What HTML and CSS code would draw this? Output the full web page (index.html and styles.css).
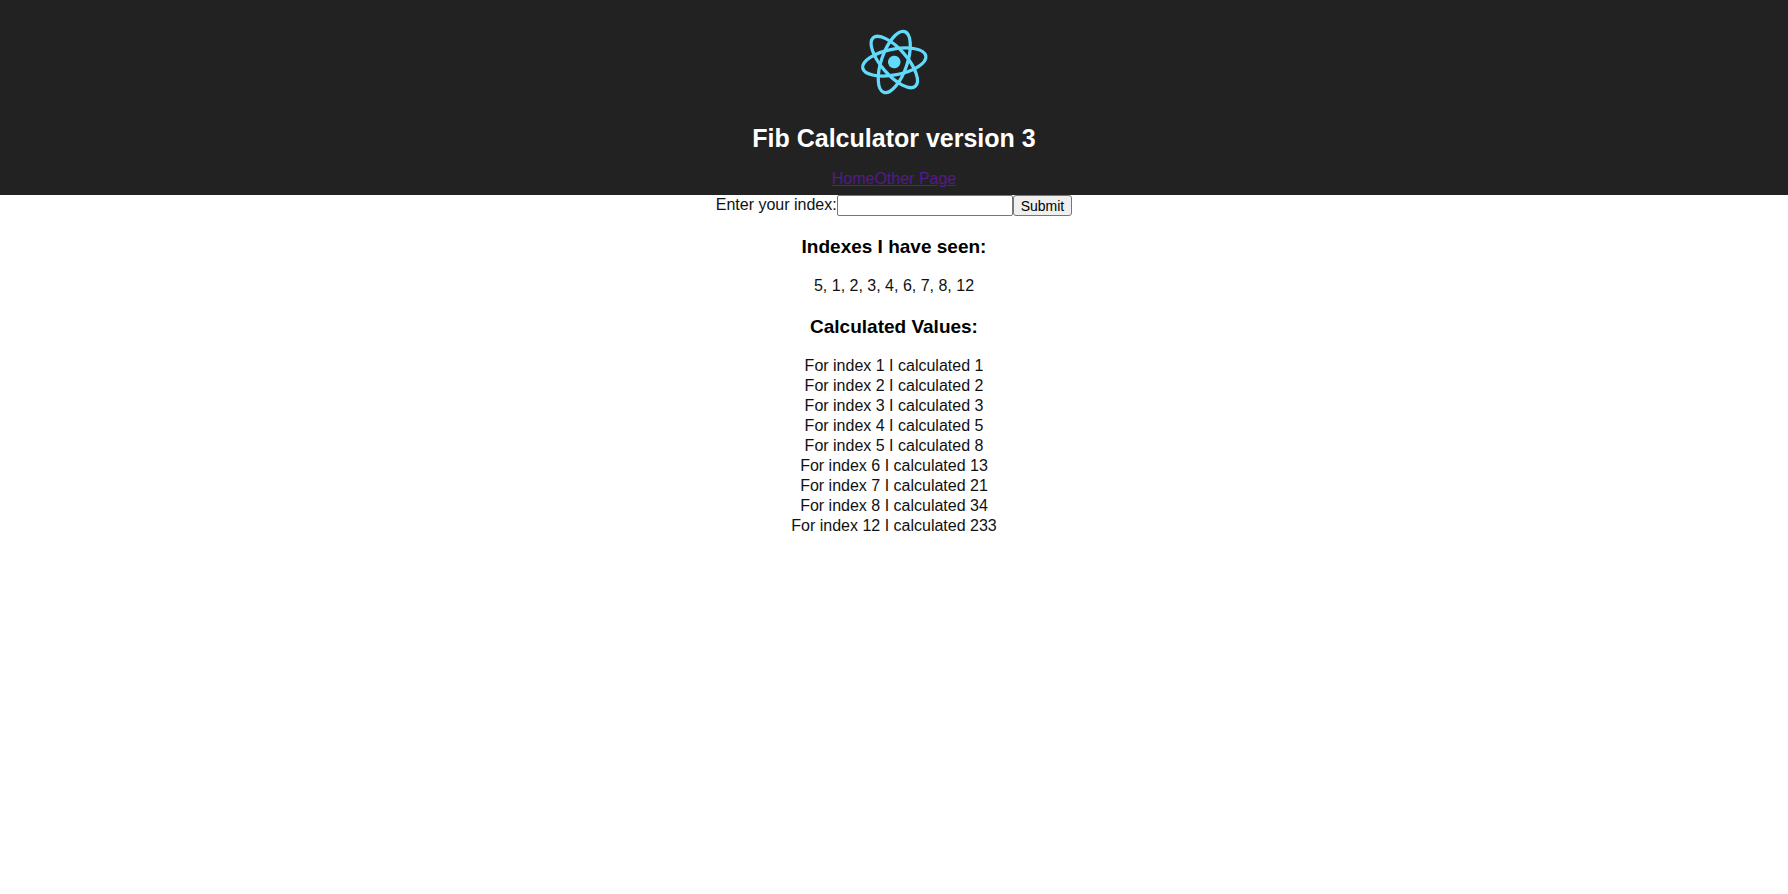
FILE: index.html
```html
<!DOCTYPE html>
<html lang="en">
<head>
<meta charset="utf-8">
<title>Fib Calculator</title>
<link rel="stylesheet" href="styles.css">
</head>
<body>
<div class="app">
  <header class="app-header">
    <svg class="app-logo" viewBox="0 0 600 600" role="img" aria-label="React logo">
      <g transform="translate(302 300) rotate(-11)">
        <circle class="nucleus" r="46"/>
        <g class="orbits">
          <ellipse rx="235" ry="94"/>
          <ellipse rx="235" ry="94" transform="rotate(60)"/>
          <ellipse rx="235" ry="94" transform="rotate(120)"/>
        </g>
      </g>
    </svg>
    <h1 class="app-title">Fib Calculator version 3</h1>
    <nav class="app-nav"><a href="#home">Home</a><a href="#otherpage">Other Page</a></nav>
  </header>
  <main>
    <form class="index-form">
      <label for="index">Enter your index:</label><input class="index-input" id="index" type="text"><button class="submit" type="button">Submit</button>
    </form>
    <h3 class="section-title">Indexes I have seen:</h3>
    <div>5, 1, 2, 3, 4, 6, 7, 8, 12</div>
    <h3 class="section-title">Calculated Values:</h3>
    <div>For index 1 I calculated 1</div>
    <div>For index 2 I calculated 2</div>
    <div>For index 3 I calculated 3</div>
    <div>For index 4 I calculated 5</div>
    <div>For index 5 I calculated 8</div>
    <div>For index 6 I calculated 13</div>
    <div>For index 7 I calculated 21</div>
    <div>For index 8 I calculated 34</div>
    <div>For index 12 I calculated 233</div>
  </main>
</div>
</body>
</html>
```

FILE: styles.css
```css
body {
  margin: 0;
  background: #fff;
  color: #111;
  font: 16px/20px "Liberation Sans", Arial, sans-serif;
}

.app {
  text-align: center;
}

.app-header {
  padding: 21px 20px 6px;
  background: #222;
  color: #fff;
}

.app-logo {
  display: block;
  width: 82px;
  height: 82px;
  margin: 0 auto;
}

.nucleus {
  fill: #61dafb;
}

.orbits {
  fill: none;
  stroke: #61dafb;
  stroke-width: 24;
}

.app-title {
  margin: 21px 0 17px;
  font-size: 25px;
  line-height: 28px;
}

.app-nav a {
  color: #551a8b;
}

.index-form {
  display: flex;
  justify-content: center;
  align-items: flex-start;
}

.index-input {
  box-sizing: border-box;
  width: 176px;
  height: 21px;
  padding: 1px 2px;
  border: 1px solid #767676;
  border-radius: 2px;
  font: inherit;
}

.submit {
  box-sizing: border-box;
  height: 21px;
  padding: 0 7px;
  border: 1px solid #767676;
  border-radius: 3px;
  background: #efefef;
  color: #000;
  font: 14px/18px "Liberation Sans", Arial, sans-serif;
}

.section-title {
  margin: 20px 0 19px;
  color: #000;
  font-size: 19px;
  line-height: 21px;
}
```
